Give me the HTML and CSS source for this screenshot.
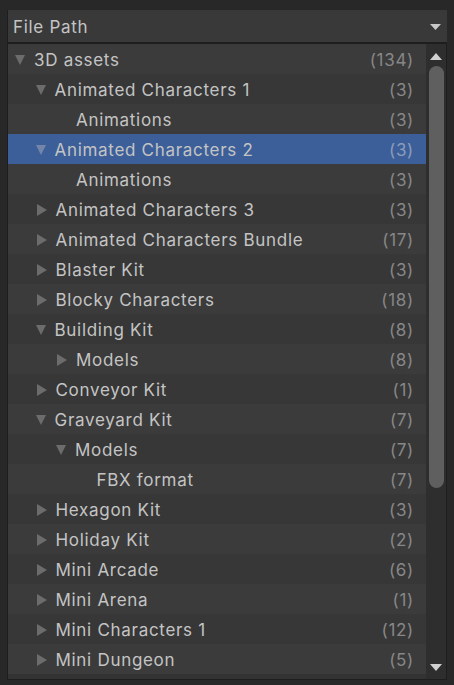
FILE: index.html
```html
<!DOCTYPE html>
<html lang="en">
<head>
    <meta charset="UTF-8">
    <meta name="viewport" content="width=device-width, initial-scale=1.0">
    <title>File Path</title>
    <link rel="stylesheet" href="styles.css">
</head>
<body>
    <div class="panel">
        <div class="dropdown">
            <span>File Path</span>
            <svg class="drop-arrow" width="11" height="6" viewBox="0 0 11 6"><path d="M0 0h11L5.5 6z"/></svg>
        </div>

        <div class="tree">
            <div class="rows">
                <div class="row l0"><i class="tri down"></i><span class="name">3D assets</span><span class="count">(134)</span></div>
                <div class="row l1"><i class="tri down"></i><span class="name">Animated Characters 1</span><span class="count">(3)</span></div>
                <div class="row l2"><i class="tri"></i><span class="name">Animations</span><span class="count">(3)</span></div>
                <div class="row l1 selected"><i class="tri down"></i><span class="name">Animated Characters 2</span><span class="count">(3)</span></div>
                <div class="row l2"><i class="tri"></i><span class="name">Animations</span><span class="count">(3)</span></div>
                <div class="row l1"><i class="tri right"></i><span class="name">Animated Characters 3</span><span class="count">(3)</span></div>
                <div class="row l1"><i class="tri right"></i><span class="name">Animated Characters Bundle</span><span class="count">(17)</span></div>
                <div class="row l1"><i class="tri right"></i><span class="name">Blaster Kit</span><span class="count">(3)</span></div>
                <div class="row l1"><i class="tri right"></i><span class="name">Blocky Characters</span><span class="count">(18)</span></div>
                <div class="row l1"><i class="tri down"></i><span class="name">Building Kit</span><span class="count">(8)</span></div>
                <div class="row l2"><i class="tri right"></i><span class="name">Models</span><span class="count">(8)</span></div>
                <div class="row l1"><i class="tri right"></i><span class="name">Conveyor Kit</span><span class="count">(1)</span></div>
                <div class="row l1"><i class="tri down"></i><span class="name">Graveyard Kit</span><span class="count">(7)</span></div>
                <div class="row l2"><i class="tri down"></i><span class="name">Models</span><span class="count">(7)</span></div>
                <div class="row l3"><i class="tri"></i><span class="name">FBX format</span><span class="count">(7)</span></div>
                <div class="row l1"><i class="tri right"></i><span class="name">Hexagon Kit</span><span class="count">(3)</span></div>
                <div class="row l1"><i class="tri right"></i><span class="name">Holiday Kit</span><span class="count">(2)</span></div>
                <div class="row l1"><i class="tri right"></i><span class="name">Mini Arcade</span><span class="count">(6)</span></div>
                <div class="row l1"><i class="tri right"></i><span class="name">Mini Arena</span><span class="count">(1)</span></div>
                <div class="row l1"><i class="tri right"></i><span class="name">Mini Characters 1</span><span class="count">(12)</span></div>
                <div class="row l1"><i class="tri right"></i><span class="name">Mini Dungeon</span><span class="count">(5)</span></div>
            </div>
            <div class="scrollbar">
                <svg class="scroll-arrow" width="12" height="7" viewBox="0 0 12 7"><path d="M6 0l6 7H0z"/></svg>
                <div class="track"><div class="thumb"></div></div>
                <svg class="scroll-arrow" width="12" height="7" viewBox="0 0 12 7"><path d="M0 0h12L6 7z"/></svg>
            </div>
        </div>
    </div>
</body>
</html>
```

FILE: styles.css
```css
body {
    margin: 0;
    background-color: #282828;
    font-family: Inter, "Noto Sans", sans-serif;
    font-size: 17px;
    letter-spacing: 0.7px;
    color: #c4c4c4;
}
.panel {
    width: 440px;
    padding: 10px 7px 5px 7px;
}
.dropdown {
    display: flex;
    align-items: center;
    justify-content: space-between;
    box-sizing: border-box;
    height: 34px;
    padding: 1px 6px 0 5px;
    background-color: #393939;
    border-left: 1px solid #1e1e1e;
    border-bottom: 2px solid #1e1e1e;
}
.drop-arrow {
    fill: #c8c8c8;
}
.tree {
    display: flex;
    height: 635px;
    border: 1px solid #1e1e1e;
    border-top: none;
    background-color: #333333;
}
.rows {
    flex: 1;
}
.row {
    display: flex;
    align-items: center;
    box-sizing: border-box;
    height: 30px;
    padding-top: 1px;
    padding-right: 12px;
    background-color: #3b3b3b;
}
.row:nth-child(even) {
    background-color: #373737;
}
.row.selected {
    background-color: #3c5f99;
}
.l0 { padding-left: 7px; }
.l1 { padding-left: 27.5px; }
.l2 { padding-left: 48px; }
.l3 { padding-left: 68.5px; }
.tri {
    width: 11px;
    height: 10px;
    margin-right: 9px;
    flex-shrink: 0;
}
.tri.down {
    width: 0;
    height: 0;
    border-left: 5.5px solid transparent;
    border-right: 5.5px solid transparent;
    border-top: 10px solid #6c6c6c;
}
.tri.right {
    width: 0;
    height: 0;
    margin-left: 1px;
    margin-right: 9px;
    border-top: 6px solid transparent;
    border-bottom: 6px solid transparent;
    border-left: 10px solid #6c6c6c;
}
.selected .tri.down {
    border-top-color: #7385a8;
}
.name {
    flex: 1;
}
.count {
    color: #878787;
}
.selected .count {
    color: #8b9cbb;
}
.scrollbar {
    width: 20px;
    display: flex;
    flex-direction: column;
    align-items: center;
    background-color: #2e2e2e;
    padding: 9px 0 8px 0;
}
.scroll-arrow {
    fill: #d0d0d0;
}
.track {
    flex: 1;
    width: 15px;
    padding: 6px 0;
}
.thumb {
    height: 422px;
    background-color: #5f5f5f;
    border-radius: 8px;
}
```
